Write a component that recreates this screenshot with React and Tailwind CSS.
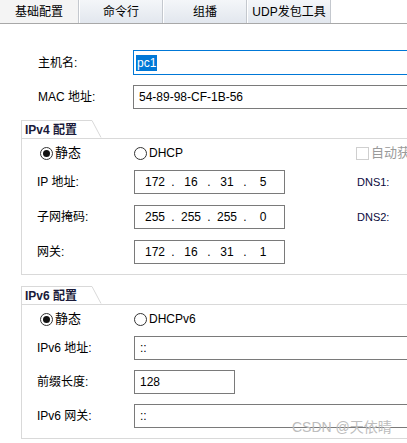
import React from 'react';

const FONT = { fontFamily: '"Liberation Sans", "Noto Sans CJK SC", sans-serif' };

const TABS = ['基础配置', '命令行', '组播', 'UDP发包工具'];

function Radio({ checked, label }) {
  return (
    <div className="flex items-center gap-[2px]">
      <span className="flex h-[13px] w-[13px] items-center justify-center rounded-full border border-[#333] bg-white">
        {checked && <span className="h-[7px] w-[7px] rounded-full bg-[#111]" />}
      </span>
      <span className={checked ? 'text-[13px]' : 'text-[12px]'}>{label}</span>
    </div>
  );
}

function IpInput({ parts }) {
  return (
    <div className="flex h-[24px] w-[151px] shrink-0 items-center border border-[#7a7a7a] bg-white pl-[6px] text-[12px]">
      {parts.map((p, i) => (
        <React.Fragment key={i}>
          {i > 0 && <span className="w-[8px] text-center">.</span>}
          <span className="w-[28px] text-center">{p}</span>
        </React.Fragment>
      ))}
    </div>
  );
}

function TextInput({ value, w = 'w-[300px]' }) {
  return (
    <div className={`flex h-[24px] ${w} shrink-0 items-center border border-[#7a7a7a] bg-white pl-[5px] text-[12px]`}>
      {value}
    </div>
  );
}

function GroupBox({ title, children }) {
  return (
    <div className="ml-[21px]">
      <div className="flex h-[18px]">
        <div className="flex w-[71px] items-center border-l border-t border-[#d9d9d9] pl-[3px] text-[12px] font-bold text-[#1b1b3a]">
          {title}
        </div>
        <svg width="10" height="18" className="block">
          <line x1="0" y1="0.5" x2="9" y2="17.5" stroke="#d9d9d9" strokeWidth="1" />
        </svg>
      </div>
      <div className="w-[420px] border-b border-l border-t border-[#d9d9d9] pb-[10px]">{children}</div>
    </div>
  );
}

function Row({ label, children, right }) {
  return (
    <div className="flex h-[24px] items-center">
      <span className="w-[112px] shrink-0 pl-[15px] text-[12px]">{label}</span>
      {children}
      {right && <span className="ml-[72px] text-[11px] text-[#0b0b40]">{right}</span>}
    </div>
  );
}

function TabSep() {
  return (
    <div className="flex">
      <span className="w-px bg-[#c4c8ce]" />
      <span className="w-px bg-white" />
    </div>
  );
}

export default function App() {
  return (
    <div className="relative h-[443px] w-[407px] overflow-hidden bg-white text-black" style={FONT}>
      {/* Tabs */}
      <div className="flex h-[24px] border-b border-[#a8a8a8]">
        {TABS.map((t, i) => (
          <div key={t} className="flex">
            {i > 0 && <TabSep />}
            <div
              className={`flex h-full items-center justify-center text-[12px] ${
                i === 0 ? 'w-[78px] bg-[#f4f4f4]' : 'w-[82px] bg-gradient-to-b from-[#f4f6f9] to-[#e2e7ee]'
              }`}
            >
              {t}
            </div>
          </div>
        ))}
        <TabSep />
      </div>

      {/* Host */}
      <div className="mt-[26px] flex h-[25px] items-center">
        <span className="w-[133px] shrink-0 pl-[38px] text-[12px]">主机名:</span>
        <div className="flex h-[25px] w-[300px] shrink-0 items-center border border-[#0078d7] bg-white pl-[2px] text-[12px]">
          <span className="bg-[#0078d7] px-[1px] leading-[16px] text-white">pc1</span>
        </div>
      </div>
      <div className="mt-[10px] flex h-[24px] items-center">
        <span className="w-[133px] shrink-0 pl-[38px] text-[12px]">MAC 地址:</span>
        <TextInput value="54-89-98-CF-1B-56" />
      </div>

      {/* IPv4 */}
      <div className="mt-[11px]">
        <GroupBox title="IPv4 配置">
          <div className="mt-[7px] flex h-[14px] items-center pl-[18px]">
            <div className="w-[94px]">
              <Radio checked label="静态" />
            </div>
            <Radio label="DHCP" />
            <div className="ml-[173px] flex shrink-0 items-center gap-[2px] whitespace-nowrap text-[13px] text-[#9a9a9a]">
              <span className="h-[13px] w-[13px] border border-[#cfcfcf] bg-white" />
              自动获取
            </div>
          </div>
          <div className="mt-[10px] flex flex-col gap-[11px]">
            <Row label="IP 地址:" right="DNS1:">
              <IpInput parts={['172', '16', '31', '5']} />
            </Row>
            <Row label="子网掩码:" right="DNS2:">
              <IpInput parts={['255', '255', '255', '0']} />
            </Row>
            <Row label="网关:">
              <IpInput parts={['172', '16', '31', '1']} />
            </Row>
          </div>
        </GroupBox>
      </div>

      {/* IPv6 */}
      <div className="mt-[11px]">
        <GroupBox title="IPv6 配置">
          <div className="mt-[7px] flex h-[14px] items-center pl-[18px]">
            <div className="w-[94px]">
              <Radio checked label="静态" />
            </div>
            <Radio label="DHCPv6" />
          </div>
          <div className="mt-[10px] flex flex-col gap-[10px]">
            <Row label="IPv6 地址:">
              <TextInput value="::" />
            </Row>
            <Row label="前缀长度:">
              <TextInput value="128" w="w-[101px]" />
            </Row>
            <Row label="IPv6 网关:">
              <TextInput value="::" />
            </Row>
          </div>
        </GroupBox>
      </div>

      <span className="absolute left-[292px] top-[417px] text-[14px] text-[#bdbdbd]">CSDN @天依晴</span>
    </div>
  );
}
